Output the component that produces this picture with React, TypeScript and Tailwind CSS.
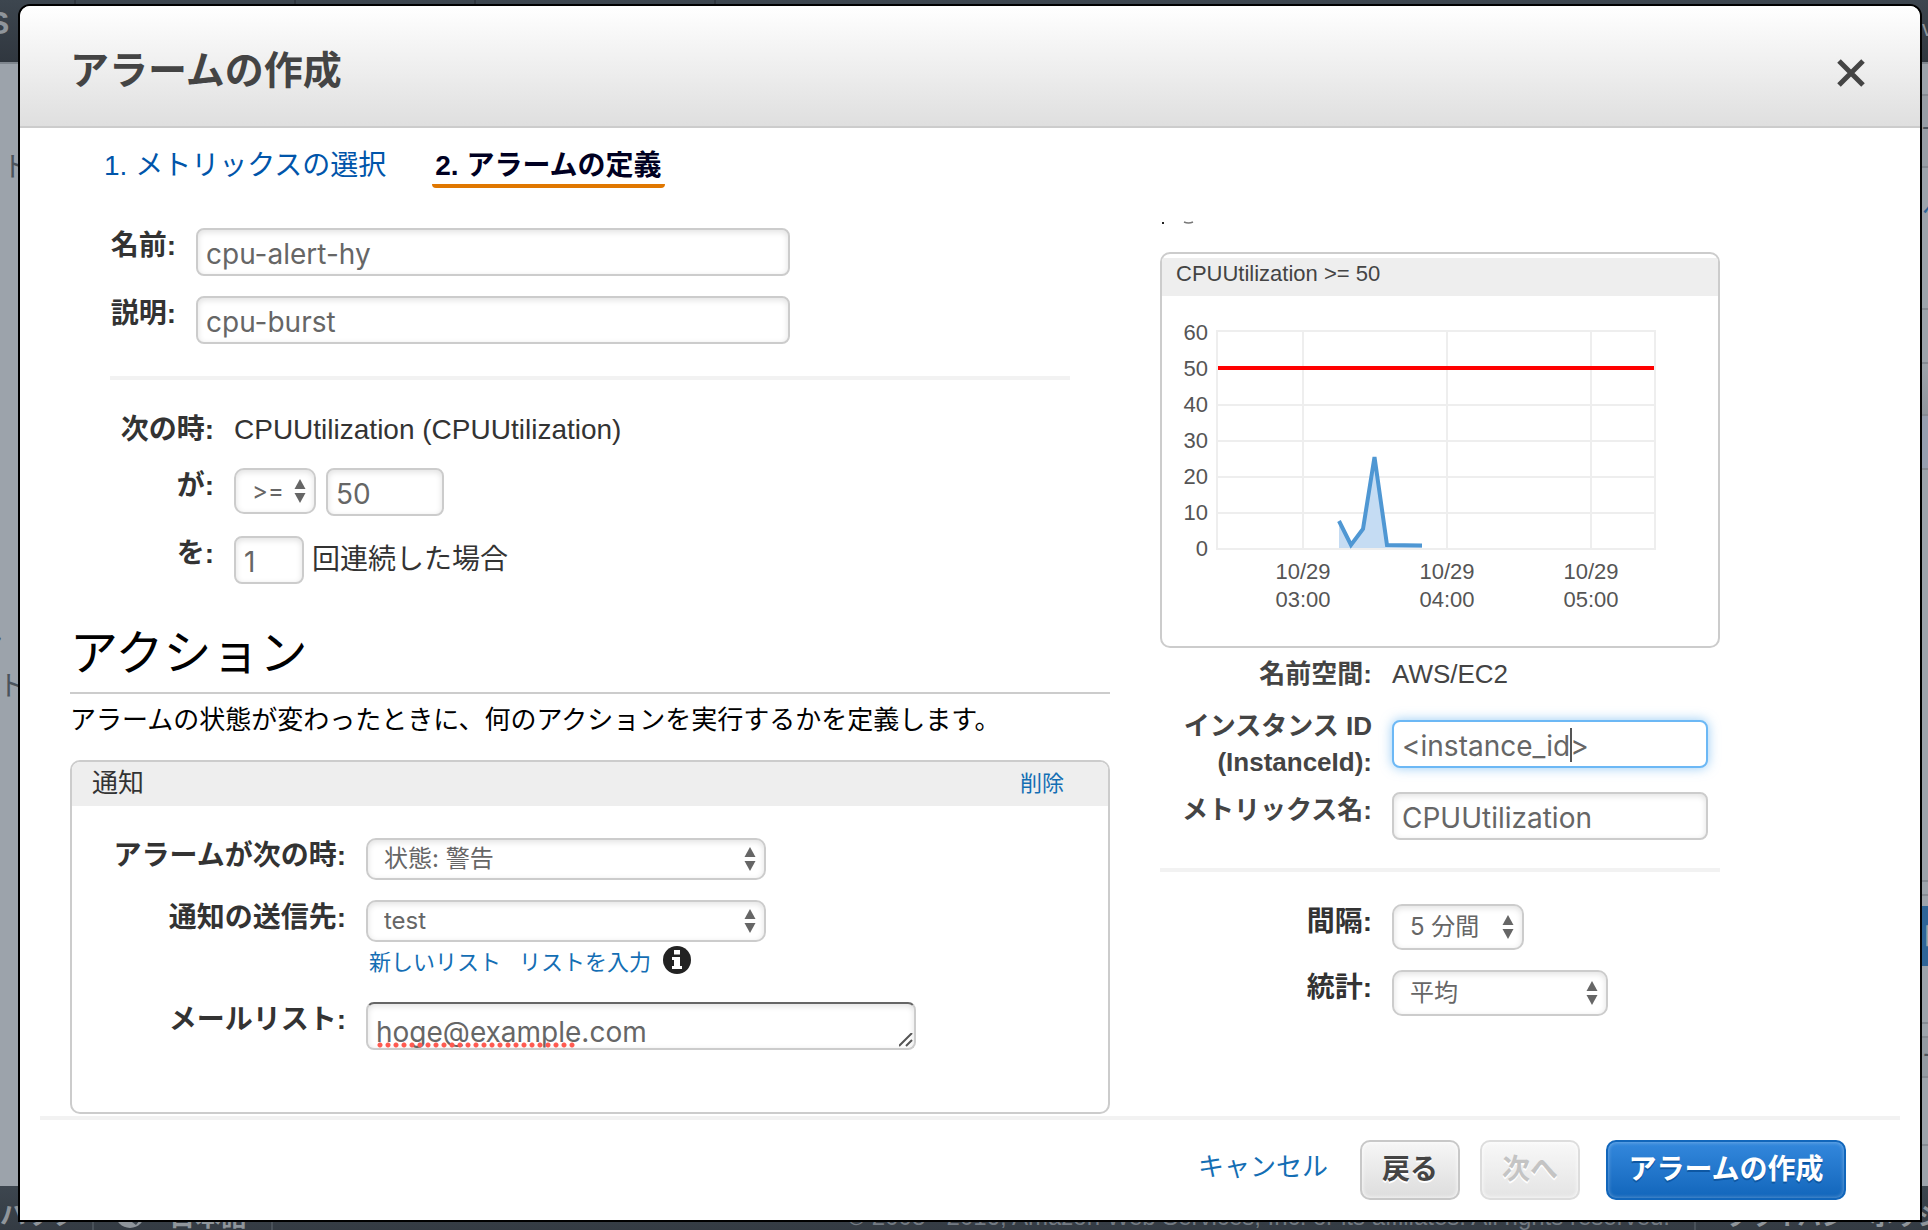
import type { ReactNode } from "react";
import { useState } from "react";

const UI = "font-['Liberation_Sans','Noto_Sans_CJK_JP',sans-serif]";
const FIELD = "font-[Inter,'Noto_Sans_CJK_JP',sans-serif]";

const fieldBox =
  "block h-12 rounded-[8px] border-2 border-[#cccccc] bg-white px-2 pt-[3px] text-[28px] leading-[36px] text-[#666666] shadow-[inset_0_2px_6px_rgba(0,0,0,0.12)] outline-none";

function Label({ htmlFor, className, children }: { htmlFor?: string; className: string; children: ReactNode }) {
  return (
    <label htmlFor={htmlFor} className={`shrink-0 text-right font-bold ${className}`}>
      {children}
    </label>
  );
}

function Arrows() {
  return (
    <svg
      aria-hidden="true"
      viewBox="0 0 12 24"
      className="pointer-events-none absolute top-1/2 right-[10px] h-6 w-3 -translate-y-1/2 fill-[#666666]"
    >
      <path d="M6 0 L11.5 10 H0.500 Z" />
      <path d="M6 24 L11.500 14 H0.500 Z" />
    </svg>
  );
}

function Select({ id, options, className, label }: { id: string; options: string[]; className: string; label?: string }) {
  return (
    <div className={`relative ${className}`}>
      <select
        id={id}
        aria-label={label}
        className={`${FIELD} block h-full w-full appearance-none rounded-[10px] border-2 border-[#cccccc] bg-white pl-4 text-[24px] leading-[32px] text-[#666666] shadow-[inset_0_2px_6px_rgba(0,0,0,0.12)] outline-none`}
      >
        {options.map((o) => (
          <option key={o}>{o}</option>
        ))}
      </select>
      <Arrows />
    </div>
  );
}

function Chart() {
  const rows = [35, 71, 109, 145, 181, 217, 253];
  const times = [
    { x: 141, t: "03:00" },
    { x: 285, t: "04:00" },
    { x: 429, t: "05:00" },
  ];
  return (
    <svg viewBox="0 0 556 350" className={`${UI} block w-full`} role="img" aria-label="CPUUtilization">
      <g stroke="#eeeeee" strokeWidth="2">
        {rows.map((y) => (
          <line key={y} x1="54" x2="494" y1={y} y2={y} />
        ))}
        <line x1="55" x2="55" y1="34" y2="254" />
        {times.map((p) => (
          <line key={p.x} x1={p.x} x2={p.x} y1="34" y2="254" />
        ))}
        <line x1="493" x2="493" y1="34" y2="254" />
      </g>
      <path d="M177 224 L189 250 L201 233 L212 161 L224 249 L260 249.500 V252 H177 Z" fill="#c5dcf3" />
      <path d="M177 225 L189 249 L201 233 L212.500 161 L225 249 L260 249.500" fill="none" stroke="#4f97d3" strokeWidth="4" />
      <line x1="56" x2="492" y1="72" y2="72" stroke="#ff0000" strokeWidth="4" />
      <g fill="#555555" fontSize="22" textAnchor="end">
        {[60, 50, 40, 30, 20, 10, 0].map((v, i) => (
          <text key={v} x="46" y={44 + i * 36}>
            {v}
          </text>
        ))}
      </g>
      <g fill="#555555" fontSize="22" textAnchor="middle">
        {times.map((p) => (
          <text key={p.t} x={p.x} y="283">
            10/29
            <tspan x={p.x} dy="28">
              {p.t}
            </tspan>
          </text>
        ))}
      </g>
    </svg>
  );
}

function Backdrop() {
  return (
    <div aria-hidden="true" className="col-start-1 row-start-1 flex flex-col overflow-hidden bg-[#9ca3ab]">
      <div className="flex h-16 justify-between overflow-hidden border-b-2 border-[#7f868e] bg-linear-to-b from-[#3d464f] to-[#30373f] text-[#8f959b]">
        <div className="flex">
          <span className="-ml-3 w-[88px] border-r-2 border-[#30373f] text-[32px] leading-[46px] font-bold">S</span>
          <span className="w-[220px] border-r-2 border-[#30373f]" />
          <span className="w-[180px] border-r-2 border-[#30373f]" />
          <span className="w-[240px] border-r-2 border-[#30373f]" />
        </div>
        <span className="w-[6px] pt-3 text-[22px]">v</span>
      </div>
      <div className="flex flex-1 justify-between text-[28px] text-[#4b535c]">
        <div className="flex w-[18px] flex-col overflow-hidden whitespace-nowrap">
          <span className="-ml-[26px] pt-[86px] leading-[36px]">ート</span>
          <span className="-ml-[25px] pt-[440px] leading-[36px]">ン</span>
          <span className="-ml-[2px] pt-[7px] leading-[36px]">ト</span>
        </div>
        <div className="flex w-[6px] flex-col overflow-hidden text-[24px]">
          <div className="h-8 border-b-2 border-[#858b93]" />
          <div className="h-[72px] border-b-2 border-[#858b93] bg-[#979da5] pt-3">-</div>
          <div className="h-[142px] border-b-2 border-[#858b93] pt-6 text-[#2e6497]">ヘ</div>
          <div className="h-[54px] border-b-2 border-[#858b93]" />
          <div className="h-[52px] border-b-2 border-[#858b93] bg-linear-to-b from-[#9ca3ab] to-[#90969d]" />
          <div className="h-[54px] border-b-2 border-[#858b93] bg-[#959eaf]" />
          <div className="h-[412px] border-b-2 border-[#858b93]" />
          <div className="h-[14px] border-b-2 border-[#858b93]" />
          <div className="h-[10px]" />
          <div className="h-[60px] bg-[#2e6497] pt-3 text-[#9ca3ab]">日</div>
          <div className="h-[58px] border-b-2 border-[#858b93]" />
          <div className="h-[14px] border-b-2 border-[#858b93]" />
          <div className="h-[40px] border-b-2 border-[#858b93] bg-[#939aa2]">ー</div>
          <div className="h-[68px] border-b-2 border-[#858b93]" />
        </div>
      </div>
      <div className="flex h-11 overflow-hidden bg-linear-to-b from-[#3d464f] to-[#343b43] text-[26px] leading-[26px] font-bold whitespace-nowrap text-[#8f959b]">
        <span className="w-[94px] border-r-2 border-[#4a525a] pt-4">バック</span>
        <svg viewBox="0 0 30 30" className="mt-3 ml-[21px] h-[30px] w-[30px]">
          <circle cx="15" cy="15" r="15" fill="#8f959b" />
          <path d="M16 20 l6 -1 3 3 -4 5 -4 -3 Z M4 6 l8 2 -2 8 Z" fill="#3b444d" />
        </svg>
        <span className="ml-6 w-[104px] border-r-2 border-[#4a525a] pt-[18px]">日本語</span>
        <span className="flex-1 border-r-2 border-[#4a525a] pt-[18px] pr-6 text-right text-[24px] font-normal text-[#737a82]">
          © 2008 - 2016, Amazon Web Services, Inc. or its affiliates. All rights reserved.
        </span>
        <span className="w-[232px] overflow-hidden pt-[18px] pl-[30px] text-[24px]">プライバシーポリシー</span>
      </div>
    </div>
  );
}

export default function App() {
  const [name, setName] = useState("cpu-alert-hy");
  const [description, setDescription] = useState("cpu-burst");
  const [threshold, setThreshold] = useState("50");
  const [periods, setPeriods] = useState("1");
  const [emails, setEmails] = useState("hoge@example.com");
  const [instance, setInstance] = useState("<instance_id>");
  const [metric, setMetric] = useState("CPUUtilization");

  return (
    <div lang="ja" className={`${UI} grid min-h-screen grid-cols-1`}>
      <Backdrop />
      <div
        role="dialog"
        aria-labelledby="dialog-title"
        className="z-10 col-start-1 row-start-1 mt-1 mr-[6px] mb-2 ml-[18px] flex flex-col rounded-t-[12px] border-2 border-black bg-white text-[#333333]"
      >
        <header className="flex h-[122px] items-center justify-between rounded-t-[10px] border-b-2 border-[#cccccc] bg-linear-to-b from-white to-[#dfdfdf] pt-[10px] pr-[54px] pl-[50px]">
          <h1 id="dialog-title" className="text-[39px] leading-[48px] font-bold text-[#444444]">
            アラームの作成
          </h1>
          <button type="button" aria-label="閉じる" className="mt-1">
            <svg viewBox="0 0 30 28" className="h-7 w-[30px]" stroke="#444444" strokeWidth="5">
              <path d="M3 2 L27 26 M27 2 L3 26" />
            </svg>
          </button>
        </header>

        <nav className="flex gap-[46px] pt-5 pl-[84px] text-[28px] leading-[36px]">
          <a href="#metric" className="text-[#0055aa]">
            1. メトリックスの選択
          </a>
          <a
            href="#define"
            aria-current="step"
            className="rounded-b-[4px] border-b-4 border-[#e07700] px-[3px] font-bold text-[#000022]"
          >
            2. アラームの定義
          </a>
        </nav>

        <div className="flex flex-1 gap-[50px] pr-[200px] pl-[50px]">
          <main className="min-w-0 flex-[1040] pt-10">
            <div className="flex flex-col gap-5 text-[28px] leading-[36px]">
              <div className="flex gap-5">
                <Label htmlFor="name" className="w-[106px]">名前:</Label>
                <input id="name" value={name} onChange={(e) => setName(e.target.value)} className={`${fieldBox} ${FIELD} w-[594px]`} />
              </div>
              <div className="flex gap-5">
                <Label htmlFor="description" className="w-[106px]">説明:</Label>
                <input
                  id="description"
                  value={description}
                  onChange={(e) => setDescription(e.target.value)}
                  className={`${fieldBox} ${FIELD} w-[594px]`}
                />
              </div>
            </div>
            <hr className="mx-10 mt-8 border-t-4 border-[#f2f2f2]" />

            <div className="mt-8 flex flex-col gap-5 text-[28px] leading-[36px]">
              <div className="flex gap-5">
                <span className="w-[144px] shrink-0 text-right font-bold">次の時:</span>
                <span>CPUUtilization (CPUUtilization)</span>
              </div>
              <div className="flex gap-5">
                <Label htmlFor="comparison" className="w-[144px]">が:</Label>
                <div className="flex gap-[10px]">
                  <Select id="comparison" options={[">=", ">", "<=", "<"]} className="h-[46px] w-[82px]" />
                  <input
                    aria-label="しきい値"
                    value={threshold}
                    onChange={(e) => setThreshold(e.target.value)}
                    className={`${fieldBox} ${FIELD} w-[118px]`}
                  />
                </div>
              </div>
              <div className="flex gap-5">
                <Label htmlFor="periods" className="w-[144px]">を:</Label>
                <div className="flex items-center gap-2">
                  <input
                    id="periods"
                    value={periods}
                    onChange={(e) => setPeriods(e.target.value)}
                    className={`${fieldBox} ${FIELD} w-[70px]`}
                  />
                  <span>回連続した場合</span>
                </div>
              </div>
            </div>

            <h2 className="mt-10 border-b-2 border-[#cccccc] pb-2 text-[48px] leading-[60px] text-black">アクション</h2>
            <p className="mt-2 text-[26px] leading-[36px] text-black">
              アラームの状態が変わったときに、何のアクションを実行するかを定義します。
            </p>

            <section className="mt-[22px] rounded-[10px] border-2 border-[#cccccc]">
              <div className="flex h-11 items-start justify-between rounded-t-[8px] bg-[#eeeeee] pt-1 pr-11 pl-5">
                <h3 className="text-[26px] leading-[34px]">通知</h3>
                <button type="button" className="text-[22px] leading-[36px] text-[#146eb4]">
                  削除
                </button>
              </div>
              <div className="flex flex-col pt-8 pb-[62px] text-[28px] leading-[36px]">
                <div className="flex gap-5">
                  <Label htmlFor="state" className="w-[274px]">アラームが次の時:</Label>
                  <Select id="state" options={["状態: 警告", "状態: OK", "状態: 不足"]} className="h-[42px] w-[400px]" />
                </div>
                <div className="mt-5 flex gap-5">
                  <Label htmlFor="target" className="w-[274px]">通知の送信先:</Label>
                  <div>
                    <Select id="target" options={["test"]} className="h-[42px] w-[400px]" />
                    <div className="mt-1 flex h-[34px] items-start pl-[3px] text-[22px] leading-[34px] text-[#146eb4]">
                      <a href="#new-list" className="mr-[18px]">新しいリスト</a>
                      <a href="#enter-list" className="mr-3">リストを入力</a>
                      <svg viewBox="0 0 28 28" className="h-7 w-7" role="img" aria-label="情報">
                        <circle cx="14" cy="14" r="14" fill="#222222" />
                        <path d="M11 4 H17 V8.500 H11 Z M9 11 H17 V20 H19 V23 H9 V20 H11 V14 H9 Z" fill="white" />
                      </svg>
                    </div>
                  </div>
                </div>
                <div className="mt-[22px] flex gap-5">
                  <Label htmlFor="emails" className="w-[274px]">メールリスト:</Label>
                  <div className="relative h-12 w-[550px]">
                    <textarea
                      id="emails"
                      spellCheck={false}
                      value={emails}
                      onChange={(e) => setEmails(e.target.value)}
                      className={`${FIELD} block h-12 w-full resize-none overflow-hidden rounded-[8px] border-2 border-[#cccccc] border-t-[#666666] bg-white px-2 pt-[10px] text-[28px] leading-[36px] text-[#666666] shadow-[inset_0_2px_6px_rgba(0,0,0,0.12)] outline-none`}
                    />
                    <span
                      aria-hidden="true"
                      className="pointer-events-none absolute bottom-[2px] left-[10px] h-[6px] w-[200px] bg-[radial-gradient(circle,#ff5a50_2px,transparent_3px)] bg-[length:8px_6px]"
                    />
                    <svg
                      aria-hidden="true"
                      viewBox="0 0 14 14"
                      className="pointer-events-none absolute right-[3px] bottom-[3px] h-[14px] w-[14px] stroke-[#555555]"
                      strokeWidth="2"
                    >
                      <path d="M0 13 L13 0 M7 13 L13 7" />
                    </svg>
                  </div>
                </div>
              </div>
            </section>
          </main>

          <aside className="min-w-0 flex-[560] pt-8">
            <svg aria-hidden="true" viewBox="0 0 40 4" className="block h-1 w-10">
              <path d="M2 3 H4" stroke="#222222" strokeWidth="2" />
              <path d="M24 2 Q28.500 4 33 2" stroke="#777777" strokeWidth="1.500" fill="none" />
            </svg>
            <section className="mt-7 overflow-hidden rounded-[10px] border-2 border-[#cccccc] pt-1">
              <h3 className="h-[38px] bg-[#eeeeee] pl-[14px] text-[22px] leading-[32px] text-[#444444]">CPUUtilization &gt;= 50</h3>
              <Chart />
            </section>

            <div className="mt-2 text-[26px] leading-[36px] text-[#444444]">
              <div className="flex gap-5">
                <span className="w-[212px] shrink-0 text-right font-bold">名前空間:</span>
                <span>AWS/EC2</span>
              </div>
              <div className="mt-4 flex gap-5">
                <Label htmlFor="instance" className="w-[212px]">
                  インスタンス ID
                  <br />
                  (InstanceId):
                </Label>
                <div className="relative mt-3 mr-3 h-12 flex-1">
                  <input
                    id="instance"
                    value={instance}
                    onChange={(e) => setInstance(e.target.value)}
                    className={`${FIELD} block h-12 w-full rounded-[8px] border-2 border-[#6cb8f5] bg-white px-2 pt-[3px] text-[28px] leading-[36px] text-[#666666] shadow-[0_0_12px_rgba(82,168,236,0.6)] outline-none`}
                  />
                  <span aria-hidden="true" className="pointer-events-none absolute top-2 left-[178px] h-[34px] w-[2px] bg-[#555555]" />
                </div>
              </div>
              <div className="mt-3 flex gap-5">
                <Label htmlFor="metric" className="w-[212px]">メトリックス名:</Label>
                <input
                  id="metric"
                  value={metric}
                  onChange={(e) => setMetric(e.target.value)}
                  className={`${fieldBox} ${FIELD} mr-3 min-w-0 flex-1`}
                />
              </div>
            </div>
            <hr className="mt-7 border-t-4 border-[#f2f2f2]" />
            <div className="mt-8 flex flex-col gap-5 text-[28px] leading-[36px]">
              <div className="flex gap-5">
                <Label htmlFor="interval" className="w-[212px]">間隔:</Label>
                <Select id="interval" options={["5 分間", "15 分間", "1 時間"]} className="h-[46px] w-[132px]" />
              </div>
              <div className="flex gap-5">
                <Label htmlFor="stat" className="w-[212px]">統計:</Label>
                <Select id="stat" options={["平均", "最大", "最小", "合計"]} className="h-[46px] w-[216px]" />
              </div>
            </div>
          </aside>
        </div>

        <footer className="mx-5 mt-[2px] flex items-center justify-end border-t-4 border-[#f2f2f2] py-5 pr-[54px] text-[28px] font-bold">
          <button type="button" className="mr-8 pb-[6px] text-[26px] font-normal text-[#146eb4]">
            キャンセル
          </button>
          <button
            type="button"
            className="h-[60px] w-[100px] rounded-[10px] border-2 border-[#c8c8c8] bg-linear-to-b from-[#f6f6f6] to-[#dddddd] text-[#444444] shadow-[inset_0_0_4px_white] [text-shadow:0_2px_0_white]"
          >
            戻る
          </button>
          <button
            type="button"
            disabled
            className="ml-5 h-[60px] w-[100px] rounded-[10px] border-2 border-[#dddddd] bg-linear-to-b from-[#f8f8f8] to-[#e4e4e4] text-[#c4c4c4] shadow-[inset_0_0_4px_white] [text-shadow:0_2px_0_white]"
          >
            次へ
          </button>
          <button
            type="button"
            className="ml-[26px] h-[60px] w-[240px] rounded-[10px] border-2 border-[#1166bb] bg-linear-to-b from-[#3388dd] to-[#1166bb] text-white shadow-[inset_0_0_4px_rgba(255,255,255,0.4)] [text-shadow:0_2px_0_#0d57a3]"
          >
            アラームの作成
          </button>
        </footer>
      </div>
    </div>
  );
}
